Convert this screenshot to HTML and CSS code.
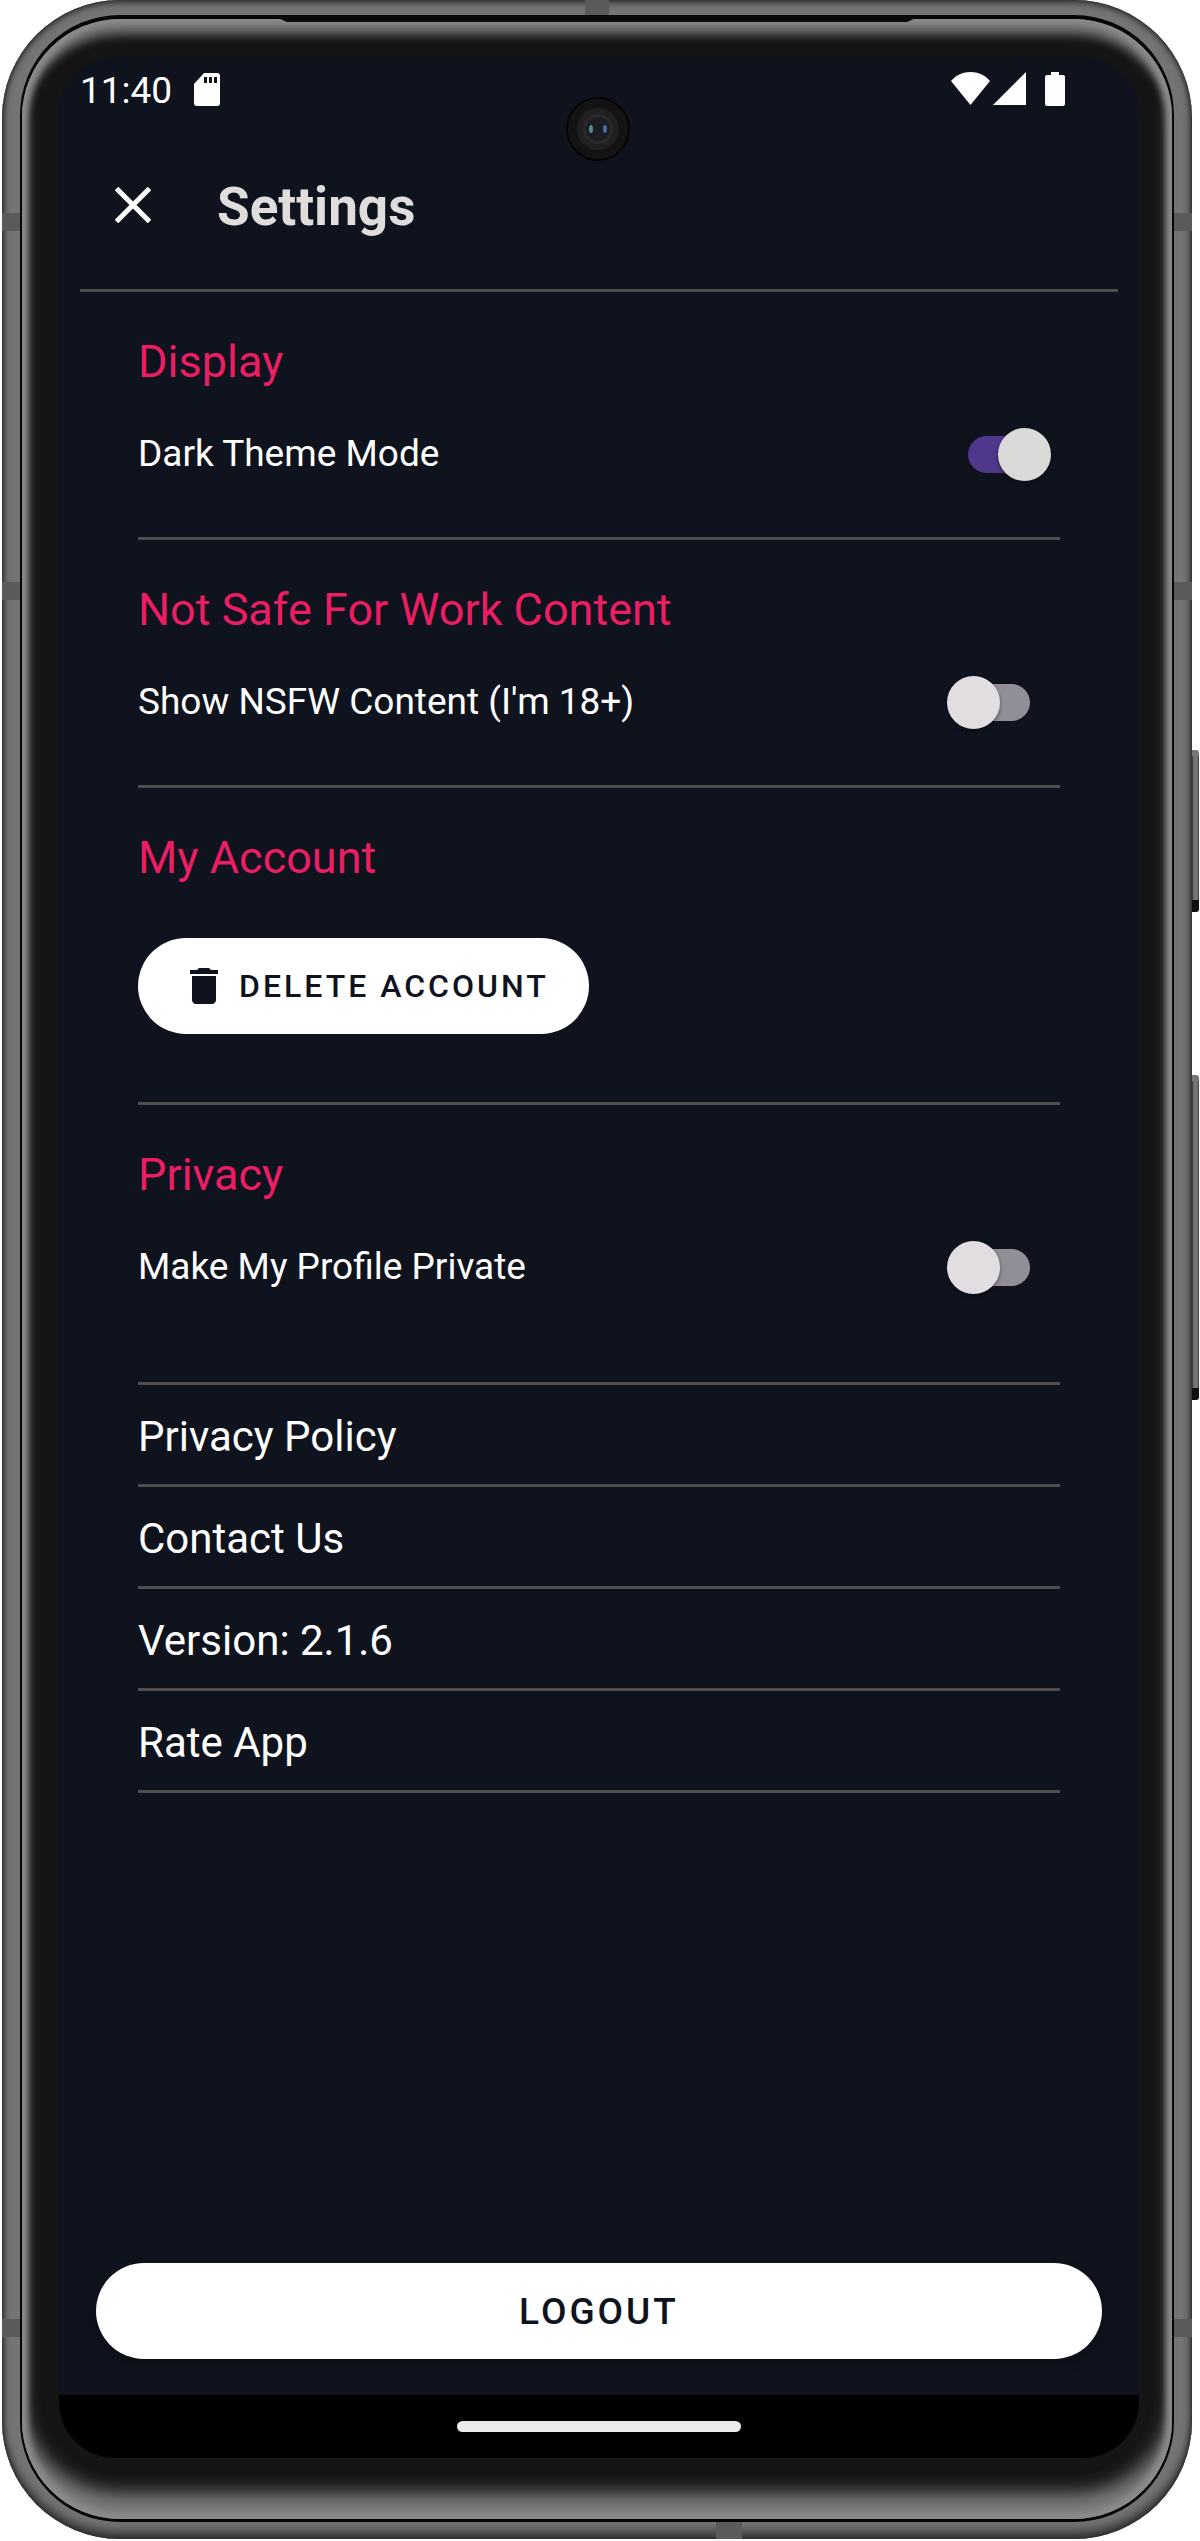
FILE: index.html
```
<!DOCTYPE html>
<html lang="en">
<head>
	<meta charset="utf-8">
	<meta name="viewport" content="width=device-width, initial-scale=1">
	<title>Settings</title>
	<link rel="stylesheet" href="styles.css">
</head>

<body>

<div class="phone">
	<!-- antenna bands and side buttons -->
	<span class="band band-top"></span>
	<span class="band band-bottom"></span>
	<span class="band band-side band-1"></span>
	<span class="band band-side band-2"></span>
	<span class="band band-side band-3"></span>
	<span class="key key-power"></span>
	<span class="key key-volume"></span>

	<div class="seam">
	<div class="glass">
	<div class="screen">

		<span class="camera">
			<svg viewBox="0 0 64 64" width="64" height="64">
				<circle cx="32" cy="32" r="31" fill="#131313" stroke="#050505" stroke-width="2"/>
				<circle cx="32" cy="32" r="21" fill="#202020"/>
				<circle cx="32" cy="32" r="15" fill="#2a2a2a"/>
				<circle cx="32" cy="32" r="12" fill="#1a1e22"/>
				<ellipse cx="25" cy="32" rx="2" ry="4" fill="#4a8f92"/>
				<ellipse cx="39" cy="32" rx="2" ry="4" fill="#4a68ae"/>
			</svg>
		</span>

		<div class="statusbar">
			<span class="time">11:40</span>
			<svg class="sd" viewBox="0 0 26 33" width="26" height="33">
				<path fill="#fff" fill-rule="evenodd" d="M10 0h13a3 3 0 0 1 3 3v27a3 3 0 0 1-3 3H3a3 3 0 0 1-3-3V11zM10 4v6h3V4zM15 4v6h3V4zM20 4v6h3V4z"/>
			</svg>
			<span class="signals">
				<svg viewBox="0 0 39 33" width="39" height="33">
					<path fill="#fff" d="M19.500 33L0 9C5 3 12 0 19.500 0S34 3 39 9z"/>
				</svg>
				<svg viewBox="0 0 33 33" width="33" height="33">
					<path fill="#fff" d="M33 0v33H0z"/>
				</svg>
				<svg class="battery" viewBox="0 0 20 34" width="20" height="34">
					<path fill="#fff" d="M6 0h8v3h4a2 2 0 0 1 2 2v27a2 2 0 0 1-2 2H2a2 2 0 0 1-2-2V5a2 2 0 0 1 2-2h4z"/>
				</svg>
			</span>
		</div>

		<header class="topbar">
			<button class="close" type="button" aria-label="Close">
				<svg viewBox="0 0 36 36" width="36" height="36">
					<path d="M1.500 1.500l33 33M34.500 1.500l-33 33" stroke="#fff" stroke-width="5"/>
				</svg>
			</button>
			<h1>Settings</h1>
		</header>

		<main>
			<section>
				<h2>Display</h2>
				<div class="row">
					<label for="dark">Dark Theme Mode</label>
					<input class="switch" type="checkbox" role="switch" id="dark" checked>
				</div>
			</section>

			<section>
				<h2>Not Safe For Work Content</h2>
				<div class="row">
					<label for="nsfw">Show NSFW Content (I'm 18+)</label>
					<input class="switch" type="checkbox" role="switch" id="nsfw">
				</div>
			</section>

			<section>
				<h2>My Account</h2>
				<button class="pill delete" type="button">
					<svg viewBox="5 3 14 18" width="28" height="36">
						<path fill="#0f131e" d="M6 19c0 1.100.9 2 2 2h8c1.100 0 2-.9 2-2V7H6zM19 4h-3.500l-1-1h-5l-1 1H5v2h14z"/>
					</svg>
					DELETE ACCOUNT
				</button>
			</section>

			<section class="privacy">
				<h2>Privacy</h2>
				<div class="row">
					<label for="private">Make My Profile Private</label>
					<input class="switch" type="checkbox" role="switch" id="private">
				</div>
			</section>

			<ul class="links">
				<li><a href="#privacy">Privacy Policy</a></li>
				<li><a href="#contact">Contact Us</a></li>
				<li>Version: 2.1.6</li>
				<li><a href="#rate">Rate App</a></li>
			</ul>
		</main>

		<button class="pill logout" type="button">LOGOUT</button>

		<div class="navbar"><span class="handle"></span></div>

	</div>
	</div>
	</div>
</div>

</body>
</html>
```
FILE: styles.css
```
* {
	box-sizing: border-box;
}

body {
	margin: 0;
	background: #fff;
	color: #fff;
	font-family: Roboto, sans-serif;
}

/* ---- phone frame ---- */
.phone {
	position: relative;
	display: flex;
	min-height: calc(100vh - 2px);
	margin: 0 8px 2px 2px;
	padding: 15px 18px 17px;
	border-radius: 118px;
	background: #747474;
	box-shadow: inset 0 0 5px #1c1c1c, inset 0 -8px 10px #3c3c3c, inset 0 4px 6px #4a4f4c;
}

.seam {
	position: relative;
	display: flex;
	flex: 1;
	padding: 4px 2px 3px;
	border-radius: 100px;
	background: #060606;
}

/* earpiece slot */
.seam::before {
	content: "";
	position: absolute;
	z-index: 1;
	top: 1px;
	left: 22%;
	right: 22%;
	height: 6px;
	background: #0a0a0a;
	clip-path: polygon(0 0, 100% 0, 98% 100%, 2% 100%);
}

.glass {
	display: flex;
	flex: 1;
	padding: 38px 33px 61px 37px;
	border-radius: 98px;
	background: #151515;
	box-shadow: inset 0 0 6px 6px #8c8c8c, inset 0 16px 10px #6c6c6c, inset 0 -26px 18px #7c7c7c;
}

.band {
	position: absolute;
	background: #5a5a5a;
}

.band-top {
	top: 0;
	left: 49%;
	width: 24px;
	height: 15px;
}

.band-bottom {
	bottom: 0;
	left: 60%;
	width: 26px;
	height: 17px;
}

.band-side {
	left: 0;
	right: 0;
	height: 18px;
}

.band-1 {
	top: 213px;
}

.band-2 {
	top: 582px;
}

.band-3 {
	bottom: 202px;
}

.key {
	position: absolute;
	right: -7px;
	width: 7px;
	border-top: 6px solid #777;
	border-bottom: 12px solid #111;
	border-radius: 0 3px 3px 0;
	background: linear-gradient(90deg, #333, #777 30%, #777 75%, #333);
}

.key-power {
	top: 750px;
	height: 162px;
}

.key-volume {
	top: 1075px;
	height: 325px;
}

/* ---- screen ---- */
.screen {
	position: relative;
	display: flex;
	flex: 1;
	flex-direction: column;
	overflow: hidden;
	border-radius: 56px;
	background: #0f131e;
}

.camera {
	position: absolute;
	top: 40px;
	left: 50%;
	width: 64px;
	height: 64px;
	margin-left: -33px;
}

.statusbar {
	display: flex;
	align-items: center;
	height: 64px;
	padding: 0 74px 0 21px;
}

.time {
	padding-top: 4px;
	font-size: 37px;
	line-height: 44px;
}

.sd {
	margin-left: 22px;
}

.signals {
	display: flex;
	gap: 3px;
	margin-left: auto;
}

.battery {
	margin-left: 16px;
}

.topbar {
	display: flex;
	align-items: center;
	gap: 48px;
	height: 171px;
	margin: 0 21px;
	padding: 0 17px;
	border-bottom: 3px solid #504d4e;
}

.close {
	display: flex;
	padding: 18px;
	border: 0;
	background: none;
	cursor: pointer;
}

h1 {
	margin: 0;
	padding-top: 4px;
	color: #e0dedc;
	font-size: 53px;
	font-weight: 700;
	line-height: 60px;
}

main {
	padding: 0 79px;
}

section {
	padding: 44px 0 61px;
	border-bottom: 3px solid #504d4e;
}

h2 {
	margin: 0;
	color: #eb1e63;
	font-size: 45px;
	font-weight: 400;
	line-height: 52px;
}

.row {
	display: flex;
	align-items: center;
	justify-content: space-between;
	height: 44px;
	margin-top: 44px;
	padding-right: 30px;
	font-size: 37px;
	line-height: 44px;
}

.switch {
	appearance: none;
	position: relative;
	width: 62px;
	height: 37px;
	margin: 0;
	border-radius: 19px;
	background: #918e98;
	cursor: pointer;
}

.switch::before {
	content: "";
	position: absolute;
	top: -8px;
	left: -21px;
	width: 53px;
	height: 53px;
	border-radius: 50%;
	background: #e2dde1;
	box-shadow: 0 2px 4px rgba(0, 0, 0, 0.4);
}

.switch:checked {
	background: #4f378b;
}

.switch:checked::before {
	left: 30px;
	background: #dadad8;
}

.pill {
	display: flex;
	align-items: center;
	justify-content: center;
	height: 96px;
	border: 0;
	border-radius: 48px;
	background: #fff;
	color: #0f131e;
	font-family: Roboto, sans-serif;
	font-weight: 500;
	cursor: pointer;
}

.delete {
	gap: 21px;
	margin: 54px 0 7px;
	padding: 0 40px 0 52px;
	font-size: 32px;
	letter-spacing: 3px;
}

.privacy {
	padding-bottom: 93px;
}

.links {
	margin: 0;
	padding: 0;
	list-style: none;
}

.links li {
	height: 102px;
	padding-top: 27px;
	border-bottom: 3px solid #504d4e;
	font-size: 42px;
	line-height: 50px;
}

.links a {
	color: inherit;
	text-decoration: none;
}

.logout {
	margin: auto 37px 36px;
	font-size: 37px;
	letter-spacing: 3px;
	box-shadow: 0 6px 12px rgba(0, 0, 0, 0.25);
}

.navbar {
	display: flex;
	align-items: center;
	justify-content: center;
	height: 63px;
	background: #000;
}

.handle {
	width: 284px;
	height: 11px;
	border-radius: 6px;
	background: #ebebeb;
}
```
